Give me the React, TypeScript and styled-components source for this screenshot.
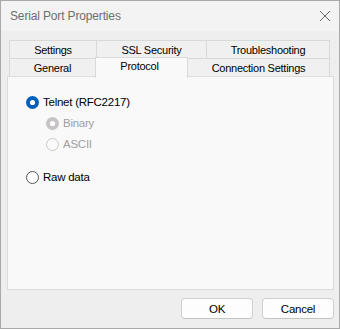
import React from "react";
import styled, { createGlobalStyle } from "styled-components";

const Global = createGlobalStyle`
  html, body { margin: 0; padding: 0; background: #ffffff; }
  * { box-sizing: border-box; }
`;

const Window = styled.div`
  width: 340px;
  height: 329px;
  border: 1px solid #a9a9a9;
  background: #eeeeee;
  display: flex;
  flex-direction: column;
  font-family: "Liberation Sans", Arial, sans-serif;
  font-size: 11px;
  letter-spacing: -0.25px;
  color: #000;
`;

const TitleBar = styled.div`
  height: 30px;
  background: #f3f3f3;
  display: flex;
  align-items: center;
  justify-content: space-between;
  padding: 0 8px 0 9px;
  flex-shrink: 0;
`;

const Title = styled.span`
  font-size: 12px;
  letter-spacing: -0.15px;
  color: #6e6e6e;
  margin-top: -1px;
`;

const CloseIcon = styled.svg`
  width: 12px;
  height: 12px;
  margin-top: -1px;
`;

const Body = styled.div`
  flex: 1;
  display: flex;
  flex-direction: column;
  padding: 9px 5px 0 6px;
`;

const TabStrip = styled.div`
  display: flex;
  flex-direction: column;
  margin-left: 2px;
  position: relative;
  z-index: 2;
`;

const TabRow = styled.div`
  display: flex;
  height: 18px;
`;

const Tab = styled.div<{ $w: number; $selected?: boolean; $first?: boolean }>`
  width: ${(p) => p.$w}px;
  height: 18px;
  margin-left: ${(p) => (p.$first ? 0 : -1)}px;
  border: 1px solid #d9d9d9;
  border-bottom: none;
  background: #f0f0f0;
  display: flex;
  align-items: center;
  justify-content: center;
  padding-top: 1px;
  ${(p) =>
    p.$selected &&
    `
    background: #f9f9f9;
    height: 21px;
    margin-top: -1px;
    position: relative;
    z-index: 3;
    align-items: flex-start;
    padding-top: 2px;
    padding-right: 4px;
  `}
`;

const Panel = styled.div`
  height: 214px;
  background: #f9f9f9;
  border: 1px solid #dcdcdc;
  position: relative;
  z-index: 1;
  display: flex;
  flex-direction: column;
  padding: 17px 0 0 18px;
`;

const RadioRow = styled.label<{ $indent?: number; $gap?: number; $disabled?: boolean }>`
  display: flex;
  align-items: center;
  gap: 4px;
  height: 16px;
  margin-left: ${(p) => p.$indent ?? 0}px;
  margin-bottom: ${(p) => p.$gap ?? 0}px;
  color: ${(p) => (p.$disabled ? "#a0a0a0" : "#000")};
  font-size: 11.5px;
`;

const RadioSvg = styled.svg`
  width: 13px;
  height: 13px;
  flex-shrink: 0;
`;

type RadioKind = "on" | "onDisabled" | "offDisabled" | "off";

function Radio({ kind }: { kind: RadioKind }) {
  if (kind === "on")
    return (
      <RadioSvg viewBox="0 0 13 13">
        <circle cx="6.5" cy="6.5" r="6.5" fill="#005fb8" />
        <circle cx="6.5" cy="6.5" r="2.6" fill="#ffffff" />
      </RadioSvg>
    );
  if (kind === "onDisabled")
    return (
      <RadioSvg viewBox="0 0 13 13">
        <circle cx="6.5" cy="6.5" r="6.5" fill="#c4c4c4" />
        <circle cx="6.5" cy="6.5" r="2.6" fill="#ffffff" />
      </RadioSvg>
    );
  if (kind === "offDisabled")
    return (
      <RadioSvg viewBox="0 0 13 13">
        <circle cx="6.5" cy="6.5" r="6" fill="#fbfbfb" stroke="#c8c8c8" strokeWidth="1" />
      </RadioSvg>
    );
  return (
    <RadioSvg viewBox="0 0 13 13">
      <circle cx="6.5" cy="6.5" r="6" fill="#fdfdfd" stroke="#575757" strokeWidth="1" />
    </RadioSvg>
  );
}

const Footer = styled.div`
  display: flex;
  justify-content: flex-end;
  gap: 9px;
  padding-top: 8px;
  padding-right: 0px;
`;

const Button = styled.button`
  width: 72px;
  height: 21px;
  background: #fdfdfd;
  border: 1px solid #d0d0d0;
  border-bottom-color: #c4c4c4;
  border-radius: 4px;
  font-family: "Liberation Sans", Arial, sans-serif;
  font-size: 11.5px;
  letter-spacing: -0.25px;
  color: #000;
  padding: 0;
  display: flex;
  align-items: center;
  justify-content: center;
`;

export default function App() {
  return (
    <>
      <Global />
      <Window>
        <TitleBar>
          <Title>Serial Port Properties</Title>
          <CloseIcon viewBox="0 0 12 12">
            <path d="M1 1 L11 11 M11 1 L1 11" stroke="#6b6b6b" strokeWidth="1" fill="none" />
          </CloseIcon>
        </TitleBar>
        <Body>
          <TabStrip>
            <TabRow>
              <Tab $w={88} $first>Settings</Tab>
              <Tab $w={111}>SSL Security</Tab>
              <Tab $w={124}>Troubleshooting</Tab>
            </TabRow>
            <TabRow>
              <Tab $w={87} $first>General</Tab>
              <Tab $w={93} $selected>Protocol</Tab>
              <Tab $w={143}>Connection Settings</Tab>
            </TabRow>
          </TabStrip>
          <Panel>
            <RadioRow $gap={5}>
              <Radio kind="on" />
              Telnet (RFC2217)
            </RadioRow>
            <RadioRow $indent={20} $gap={5} $disabled>
              <Radio kind="onDisabled" />
              Binary
            </RadioRow>
            <RadioRow $indent={20} $gap={17} $disabled>
              <Radio kind="offDisabled" />
              ASCII
            </RadioRow>
            <RadioRow>
              <Radio kind="off" />
              Raw data
            </RadioRow>
          </Panel>
          <Footer>
            <Button>OK</Button>
            <Button>Cancel</Button>
          </Footer>
        </Body>
      </Window>
    </>
  );
}
